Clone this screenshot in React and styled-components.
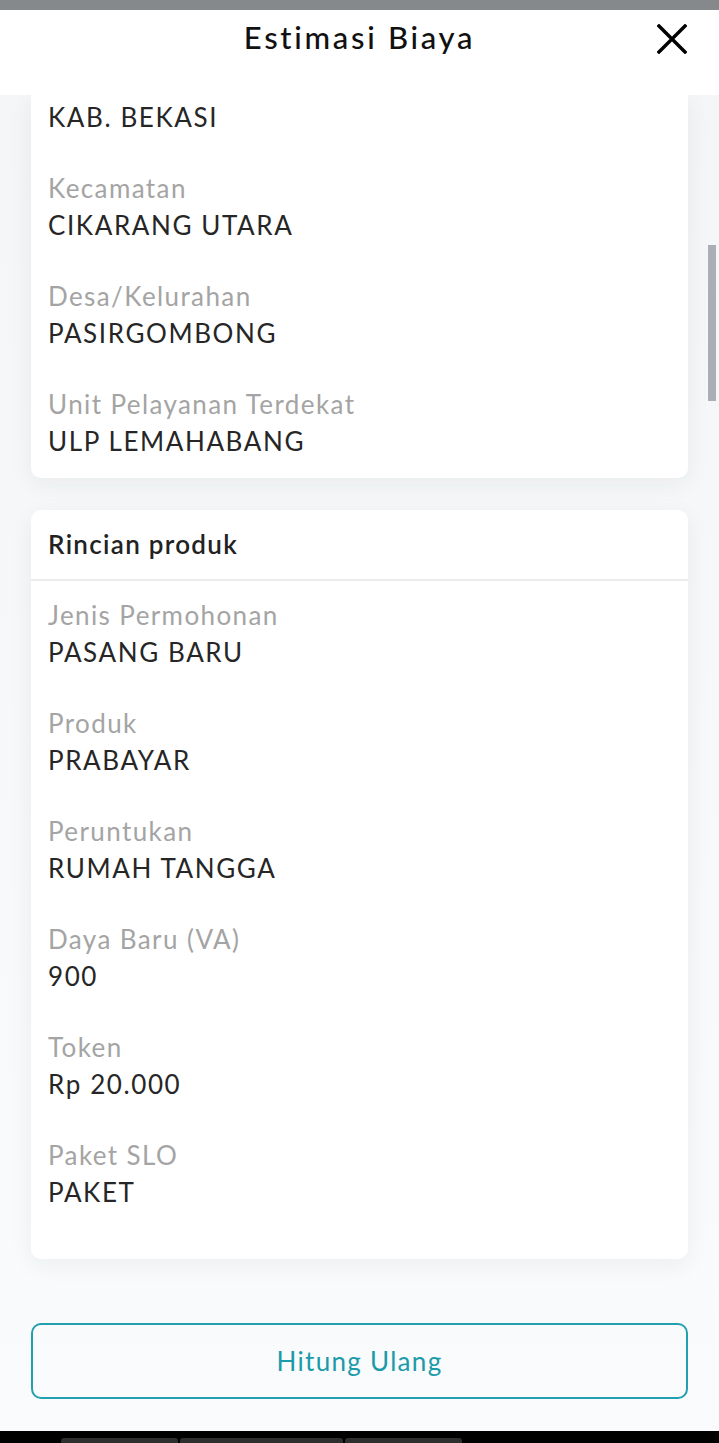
import React from 'react'
import styled, { createGlobalStyle } from 'styled-components'

const GlobalStyle = createGlobalStyle`
  html, body {
    margin: 0;
    padding: 0;
    background: #f6f8f9;
  }
  * {
    box-sizing: border-box;
  }
`;

const Screen = styled.div`
  position: relative;
  width: 719px;
  height: 1443px;
  display: flex;
  flex-direction: column;
  overflow: hidden;
  font-family: 'Lato', 'Noto Sans', sans-serif;
  letter-spacing: 1.4px;
  background: linear-gradient(180deg, #f3f5f6 0%, #f9fbfc 100%);
`;

const StatusStrip = styled.div`
  height: 10px;
  flex-shrink: 0;
  background: #86898b;
`;

const Header = styled.header`
  height: 85px;
  flex-shrink: 0;
  background: #ffffff;
  display: flex;
  align-items: flex-start;
  justify-content: center;
  position: relative;
  z-index: 2;
`;

const Title = styled.h1`
  margin: 5px 0 0;
  font-size: 31px;
  font-weight: 500;
  letter-spacing: 2.7px;
  color: #111111;
  line-height: 44px;
`;

const CloseButton = styled.button`
  position: absolute;
  right: 30px;
  top: 12px;
  width: 34px;
  height: 34px;
  padding: 0;
  border: none;
  background: none;
  display: flex;
  align-items: center;
  justify-content: center;
`;

const Body = styled.main`
  flex: 1;
  display: flex;
  flex-direction: column;
  padding: 0 31px;
  gap: 32px;
`;

const Card = styled.section`
  background: #ffffff;
  border-radius: ${props => (props.$cut ? '0 0 10px 10px' : '10px')};
  box-shadow: 0 6px 24px rgba(40, 50, 60, 0.06);
  padding: ${props => props.$pad || '0 17px'};
`;

const CardHead = styled.div`
  padding: 17px 17px 18px;
  border-bottom: 2px solid #ececec;
  font-size: 26px;
  font-weight: 600;
  letter-spacing: 1.3px;
  color: #222222;
  line-height: 34px;
`;

const Fields = styled.div`
  display: flex;
  flex-direction: column;
  gap: 34px;
  padding: ${props => props.$pad};
`;

const Field = styled.div`
  display: flex;
  flex-direction: column;
`;

const Label = styled.span`
  font-size: 26px;
  line-height: 37px;
  color: #a4a4a4;
`;

const Value = styled.span`
  font-size: 26px;
  line-height: 37px;
  letter-spacing: 1.6px;
  color: #262626;
`;

const Action = styled.button`
  margin-top: 32px;
  height: 76px;
  border: 2px solid #23a0b0;
  border-radius: 10px;
  background: transparent;
  color: #1b9aaa;
  font-family: inherit;
  font-size: 26px;
  letter-spacing: 1.3px;
  cursor: pointer;
`;

const NavBar = styled.footer`
  height: 12px;
  flex-shrink: 0;
  background: #000000;
  display: flex;
  align-items: flex-end;
  padding-left: 61px;
  gap: 2px;
`;

const NavSeg = styled.span`
  width: ${props => props.$w}px;
  height: 5px;
  background: #2e2e2e;
  border-radius: 3px 3px 0 0;
`;

const ScrollThumb = styled.div`
  position: absolute;
  right: 3px;
  top: 245px;
  width: 8px;
  height: 156px;
  background: #a9afb5;
`;

const lokasi = [
  { value: 'KAB. BEKASI' },
  { label: 'Kecamatan', value: 'CIKARANG UTARA' },
  { label: 'Desa/Kelurahan', value: 'PASIRGOMBONG' },
  { label: 'Unit Pelayanan Terdekat', value: 'ULP LEMAHABANG' },
];

const produk = [
  { label: 'Jenis Permohonan', value: 'PASANG BARU' },
  { label: 'Produk', value: 'PRABAYAR' },
  { label: 'Peruntukan', value: 'RUMAH TANGGA' },
  { label: 'Daya Baru (VA)', value: '900' },
  { label: 'Token', value: 'Rp 20.000' },
  { label: 'Paket SLO', value: 'PAKET' },
];

const CloseIcon = () => (
  <svg width="30" height="30" viewBox="0 0 30 30">
    <path d="M2 2 L28 28 M28 2 L2 28" stroke="#000" strokeWidth="3.4" strokeLinecap="square" />
  </svg>
);

const App = () => {
  return (
    <Screen>
      <GlobalStyle />
      <StatusStrip />
      <Header>
        <Title>Estimasi Biaya</Title>
        <CloseButton aria-label="Tutup">
          <CloseIcon />
        </CloseButton>
      </Header>
      <Body>
        <Card $cut>
          <Fields $pad="4px 0 18px">
            {lokasi.map((f, i) => (
              <Field key={i}>
                {f.label && <Label>{f.label}</Label>}
                <Value>{f.value}</Value>
              </Field>
            ))}
          </Fields>
        </Card>
        <Card $pad="0">
          <CardHead>Rincian produk</CardHead>
          <Fields $pad="16px 17px 48px">
            {produk.map((f, i) => (
              <Field key={i}>
                <Label>{f.label}</Label>
                <Value>{f.value}</Value>
              </Field>
            ))}
          </Fields>
        </Card>
        <Action>Hitung Ulang</Action>
      </Body>
      <NavBar>
        <NavSeg $w={117} />
        <NavSeg $w={163} />
        <NavSeg $w={117} />
      </NavBar>
      <ScrollThumb />
    </Screen>
  );
};

export default App
